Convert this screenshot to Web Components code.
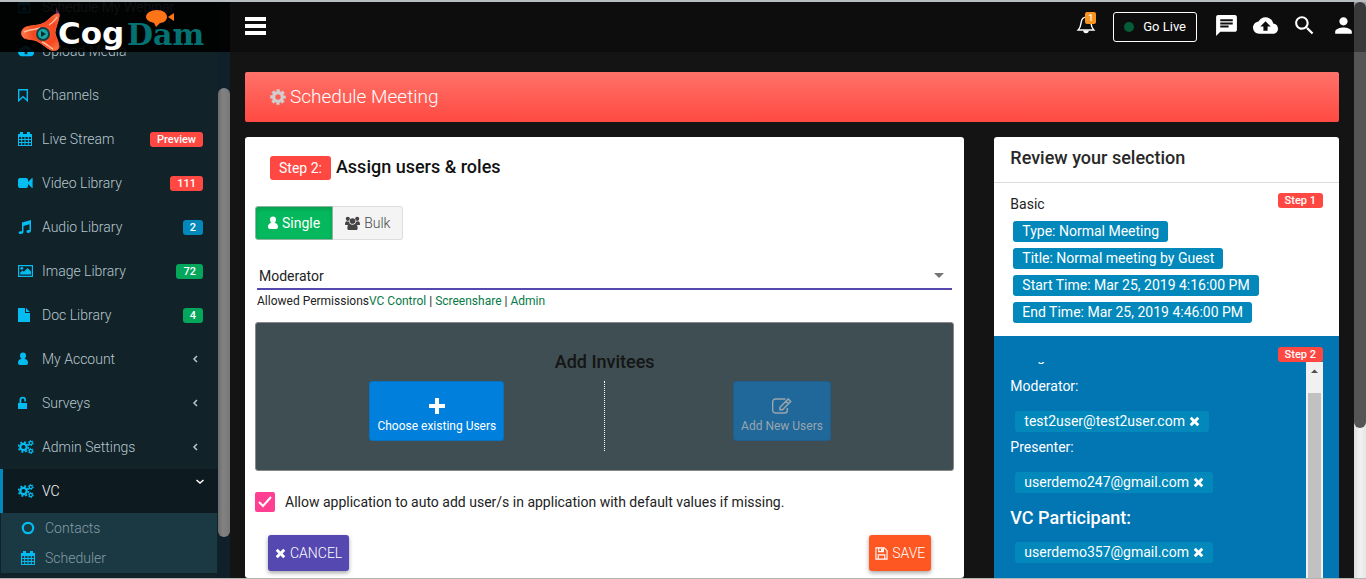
<!DOCTYPE html>
<html lang="en">
<head>
<meta charset="utf-8">
<title>CogDam - Schedule Meeting</title>
<style>
html,body{margin:0;height:100%}
body{font-family:Roboto,"Liberation Sans",sans-serif;font-size:14px;line-height:20px;color:#222;background:#141414;overflow:hidden}
</style>
</head>
<body>
<cd-app></cd-app>
<script>
const define = (name, html) => {
  const t = document.createElement('template');
  t.innerHTML = html;
  customElements.define(name, class extends HTMLElement {
    constructor() { super(); this.attachShadow({mode: 'open'}).append(t.content.cloneNode(true)); }
  });
};

const gears = '<g fill="none" stroke="currentColor"><circle cx="5.5" cy="8" r="3.2" stroke-width="2.2"/><circle cx="5.5" cy="8" r="5" stroke-width="1.6" stroke-dasharray="2 1.93"/><circle cx="12.8" cy="4" r="1.6" stroke-width="1.2"/><circle cx="12.8" cy="4" r="2.6" stroke-width="1" stroke-dasharray="1.3 1.42"/><circle cx="12.8" cy="12" r="1.6" stroke-width="1.2"/><circle cx="12.8" cy="12" r="2.6" stroke-width="1" stroke-dasharray="1.3 1.42"/></g>';
const user = '<path d="M5 1.500a3 3 0 0 1 3 3c0 1.600-.8 3-1.600 3.500C9 8 10 10 10 12c0 1.300-.8 2-2 2H2c-1.200 0-2-.7-2-2 0-2 1-4 3.600-4C2.800 7.500 2 6.100 2 4.500a3 3 0 0 1 3-3z"/>';
const calendar = '<path fill-rule="evenodd" d="M0 3h2V1h3v2h4V1h3v2h2v12H0zM1 6v2h2.200V6zm3.200 0v2h2.300V6zm3.300 0v2h2.300V6zm3.300 0v2H13V6zM1 9v2h2.200V9zm3.200 0v2h2.300V9zm3.300 0v2h2.300V9zm3.300 0v2H13V9zM1 12v2h2.200v-2zm3.200 0v2h2.300v-2zm3.300 0v2h2.300v-2zm3.300 0v2H13v-2z"/>';
const icons = {
  plusbox: [16, 16, '<path fill-rule="evenodd" d="M0 2h3V0h2v2h4V0h2v2h3v13H0zm1.500 4v7.500h11V6zM6 7h2v2h2v2H8v2H6v-2H4V9h2z"/>'],
  cloud: [24, 24, '<path d="M19.350 10.040C18.670 6.590 15.640 4 12 4 9.110 4 6.600 5.640 5.350 8.040 2.340 8.360 0 10.910 0 14c0 3.310 2.690 6 6 6h13c2.760 0 5-2.240 5-5 0-2.640-2.050-4.780-4.650-4.960zM14 13v4h-4v-4H7l5-5 5 5h-3z"/>'],
  bookmark: [16, 16, '<path fill="none" stroke="currentColor" stroke-width="1.400" d="M.7 2.700h8.600v11L5 9.800.7 13.700z"/>'],
  calendar: [16, 16, calendar],
  video: [16, 16, '<rect y="3" width="10" height="10" rx="2"/><path d="M10 7l4-4h.600v10H14l-4-4z"/>'],
  music: [16, 16, '<path d="M4 3.500L13 1v10.500c0 1.400-1 2.500-3 2.500-1.600 0-2.300-1.900-.700-2.700.7-.4 1.600-.5 2.200-.3V5.200L5.500 7v5.800c0 1.400-1 2.200-3 2.200-1.600 0-2.600-1.500-1-2.400.7-.4 1.900-.5 2.500-.3z"/>'],
  image: [16, 16, '<path fill-rule="evenodd" d="M0 2h15v12H0zm1.200 1.200v9.600h12.600V3.200z"/><circle cx="3.800" cy="5.300" r="1.400"/><path d="M2.300 11.600V9.500l2.200-2 1.300 1.200L9.600 5l3.400 3.400v3.200z"/>'],
  doc: [16, 16, '<path d="M0 1h7v5h5v9H0z"/><path d="M8 1l4 4H8z"/>'],
  user: [16, 16, user],
  person14: [10, 14, '<g transform="translate(0 -1)">' + user + '</g>'],
  unlock: [16, 16, '<path fill-rule="evenodd" d="M0 8h1.500V5a3 3 0 0 1 6.500 0v1.500H6.300V5c0-2-3-2-3 0v3H9v6H0z"/>'],
  gears: [16, 16, gears],
  ring: [16, 16, '<circle cx="7" cy="8" r="5.200" fill="none" stroke="currentColor" stroke-width="2.200"/>'],
  left: [16, 16, '<path d="M10 5L7 8l3 3" fill="none" stroke="currentColor" stroke-width="1.500"/>'],
  down: [16, 16, '<path d="M4.500 6L8 9l3.500-3" fill="none" stroke="currentColor" stroke-width="1.500"/>'],
  menu: [24, 24, '<path d="M0 2h21v4H0zm0 7h21v4H0zm0 7h21v4H0z"/>'],
  bell: [24, 24, '<path fill="none" stroke="currentColor" stroke-width="1.500" d="M12 2v2M3.500 18.500h17c-2-2-2.700-4-3.200-8C16.800 6.500 15 4.500 12 4.500s-4.800 2-5.300 6c-.5 4-1.200 6-3.200 8z"/><path d="M9 19h6a3 3 0 0 1-6 0z"/>'],
  chat: [24, 24, '<path d="M20 2H4c-1.100 0-1.990.9-1.990 2L2 22l4-4h14c1.100 0 2-.9 2-2V4c0-1.100-.9-2-2-2zM6 9h12v2H6V9zm8 5H6v-2h8v2zm4-6H6V6h12v2z"/>'],
  search: [24, 24, '<path d="M15.500 14h-.790l-.280-.270C15.410 12.590 16 11.110 16 9.500 16 5.910 13.090 3 9.500 3S3 5.910 3 9.500 5.910 16 9.500 16c1.610 0 3.090-.590 4.230-1.570l.270.280v.790l5 4.990L20.490 19l-4.990-5zm-6 0C7.010 14 5 11.990 5 9.500S7.010 5 9.500 5 14 7.010 14 9.500 11.990 14 9.500 14z"/>'],
  person: [24, 24, '<path d="M12 12c2.210 0 4-1.790 4-4s-1.790-4-4-4-4 1.790-4 4 1.790 4 4 4zm0 2c-2.670 0-8 1.340-8 4v2h16v-2c0-2.660-5.330-4-8-4z"/>'],
  cog: [16, 16, '<g fill="none" stroke="currentColor"><circle cx="8" cy="8" r="4.400" stroke-width="3.400"/><circle cx="8" cy="8" r="6.600" stroke-width="2.400" stroke-dasharray="3.200 1.984" stroke-dashoffset="1.600"/></g>'],
  users: [16, 16, '<circle cx="3" cy="3" r="2.200"/><circle cx="13" cy="3" r="2.200"/><circle cx="8" cy="5.300" r="3"/><path d="M0 9c0-2 .5-3.500 2-3.500l2.500.5c0 1.500.5 2 1 2.500-1 0-1.800.3-2.300 1H1C.4 9.500 0 9.400 0 9zm16 0c0-2-.5-3.500-2-3.500l-2.500.5c0 1.500-.5 2-1 2.500 1 0 1.800.3 2.300 1H15c.6 0 1-.1 1-.5zM2.500 13c0-3 1-4.500 3-4.500 1.500 1 3.500 1 5 0 2 0 3 1.500 3 4.500 0 1.300-.8 2-2 2h-7c-1.200 0-2-.7-2-2z"/>'],
  plus: [16, 16, '<path d="M6 0h4v6h6v4h-6v6H6v-6H0V6h6z"/>'],
  edit: [20, 16, '<path fill="none" stroke="currentColor" stroke-width="1.400" d="M13.500 1H3.500a2.800 2.800 0 0 0-2.800 2.800v8.400A2.800 2.800 0 0 0 3.500 15h9a2.800 2.800 0 0 0 2.800-2.800V10"/><path fill="none" stroke="currentColor" stroke-width="1.500" d="M8 9.200v2.500h2.500l8.200-8.200L16.200 1zM14 3.200l2.500 2.500"/>'],
  times: [12, 12, '<path d="M3 .8L6 3.700 9 .8 11.200 3 8.300 6l2.900 3L9 11.200 6 8.300l-3 2.900L.8 9l2.900-3L.8 3z"/>'],
  save: [14, 14, '<path fill="none" stroke="currentColor" stroke-width="1.200" d="M1 1h9l3 3v9H1zM4 1v4h5V1M3.500 13V8.500h7V13"/><path d="M6.500 1.500h2v3h-2z"/>'],
  arrow: [12, 6, '<path d="M1 0h10L6 5z"/>'],
  up: [9, 5, '<path d="M0 5l4.500-4.500L9 5z"/>']
};
customElements.define('cd-icon', class extends HTMLElement {
  constructor() { super(); this.attachShadow({mode: 'open'}); }
  connectedCallback() {
    const [w, h, body] = icons[this.getAttribute('name')];
    const size = this.getAttribute('size') || 16;
    this.shadowRoot.innerHTML = `<style>:host{display:inline-flex;flex:none}svg{display:block;fill:currentColor}</style>
      <svg width="${Math.round(size * w / h)}" height="${size}" viewBox="0 0 ${w} ${h}" aria-hidden="true">${body}</svg>`;
  }
});

define('cd-tag', `<style>
:host{display:inline-block;background:#0288bb;color:#fff;border-radius:3px;padding:0 9px;line-height:21px;font-size:14px;white-space:nowrap}
:host([small]){font-size:11px;line-height:15px;padding:0 7px;font-weight:500}
:host([tone=red]){background:#ff4842}
:host([tone=green]){background:#04a65b}
:host([tone=step]){background:#ff4842;line-height:24px}
</style><slot></slot>`);

define('cd-logo', `<style>:host{display:block}svg{display:block}</style>
<svg width="190" height="50" viewBox="0 0 190 50" role="img" aria-label="CogDam">
<defs><radialGradient id="g" gradientUnits="userSpaceOnUse" cx="30" cy="30" r="24"><stop offset="0" stop-color="#ff5a30"/><stop offset=".5" stop-color="#f4471f"/><stop offset="1" stop-color="#ff8050"/></radialGradient></defs>
<path d="M42 5c-1 4 4 5 3 9-1 3-5 4-7 8l-3-2c1-5 6-6 6-10 0-2 0-3 1-5z" fill="#5c2a5c"/>
<path d="M42 12c-4 0-8 6-13 9-5 3-12 2-18 4-5 2-6 8-2 11 4 2 9 1 13 3 6 3 9 7 14 9 3 1 7 1 8-3 0-5-3-9-4-14 0-5 4-12 4-17 0-2 0-3-2-2z" fill="url(#g)" stroke="#ff5a35" stroke-width="1"/>
<path d="M9 30c6-3 11-2 16-4M27 40c5 2 7 5 11 7M42 15c-2 4-5 6-8 8" fill="none" stroke="#ffc0a0" stroke-width="1.500"/>
<circle cx="28" cy="32" r="7" fill="#123e45"/><circle cx="28" cy="32" r="5" fill="#18a9a3"/><path d="M26 29l5 3-5 3z" fill="#082c35"/>
<path d="M142 8c6 0 10 3 10 7 0 3-3 6-7 6l-4 4-2-4c-4-1-8-3-8-6 0-4 5-7 11-7zM153 15l6-4v8z" fill="#ff7417"/>
<text x="43" y="42" font-family="DejaVu Sans" font-weight="700" font-size="31" fill="#fff">Cog</text>
<text x="112" y="43" font-family="DejaVu Serif" font-weight="700" font-size="30" fill="#047272">Dam</text>
</svg>`);

define('cd-nav-item', `<style>
:host{display:block;color:#b8c7ce}
a{display:flex;align-items:center;height:44px;padding:0 15px 0 15px;border-left:3px solid transparent;color:inherit;text-decoration:none;font-weight:300;font-size:14px}
.i{width:24px;color:#03bdf2;display:flex}
.t{flex:1}
:host([active]) a{background:#0d1a1f;border-color:#0288bb;color:#fff}
:host([sub]){color:#849da6}
:host([sub]) a{height:30px;padding-left:18px;border-left-width:2px}
</style><a href="#"><span class="i"><slot name="icon"></slot></span><span class="t"><slot></slot></span><slot name="end"></slot></a>`);

define('cd-sidebar', `<style>
:host{display:flex;background:#112229;overflow:hidden}
nav{flex:1;margin-top:-17px}
.sub{background:#1b3942;margin:0 1px}
.top{align-self:flex-start;margin:5px -5px 0 0}
.bar{width:12px;background:#10202a}
.thumb{margin-top:86px;height:78%;border-radius:6px;background:linear-gradient(90deg,#6c6c6c,#828282 40%,#787878)}
</style>
<nav>
<cd-nav-item><cd-icon slot="icon" name="plusbox" size="14"></cd-icon>Schedule My Webinar</cd-nav-item>
<cd-nav-item><cd-icon slot="icon" name="cloud" size="16"></cd-icon>Upload Media</cd-nav-item>
<cd-nav-item><cd-icon slot="icon" name="bookmark"></cd-icon>Channels</cd-nav-item>
<cd-nav-item><cd-icon slot="icon" name="calendar"></cd-icon>Live Stream<cd-tag slot="end" small tone="red">Preview</cd-tag></cd-nav-item>
<cd-nav-item><cd-icon slot="icon" name="video"></cd-icon>Video Library<cd-tag slot="end" small tone="red">111</cd-tag></cd-nav-item>
<cd-nav-item><cd-icon slot="icon" name="music"></cd-icon>Audio Library<cd-tag slot="end" small>2</cd-tag></cd-nav-item>
<cd-nav-item><cd-icon slot="icon" name="image"></cd-icon>Image Library<cd-tag slot="end" small tone="green">72</cd-tag></cd-nav-item>
<cd-nav-item><cd-icon slot="icon" name="doc"></cd-icon>Doc Library<cd-tag slot="end" small tone="green">4</cd-tag></cd-nav-item>
<cd-nav-item><cd-icon slot="icon" name="user"></cd-icon>My Account<cd-icon slot="end" name="left"></cd-icon></cd-nav-item>
<cd-nav-item><cd-icon slot="icon" name="unlock"></cd-icon>Surveys<cd-icon slot="end" name="left"></cd-icon></cd-nav-item>
<cd-nav-item><cd-icon slot="icon" name="gears"></cd-icon>Admin Settings<cd-icon slot="end" name="left"></cd-icon></cd-nav-item>
<cd-nav-item active><cd-icon slot="icon" name="gears"></cd-icon>VC<cd-icon class="top" slot="end" name="down"></cd-icon></cd-nav-item>
<div class="sub">
<cd-nav-item sub><cd-icon slot="icon" name="ring"></cd-icon>Contacts</cd-nav-item>
<cd-nav-item sub><cd-icon slot="icon" name="calendar"></cd-icon>Scheduler</cd-nav-item>
</div>
</nav>
<div class="bar"><div class="thumb"></div></div>`);

define('cd-header', `<style>
:host{display:flex;height:50px;background:rgba(0,0,0,.33);color:#fff}
.brand{width:210px;padding-left:15px;margin-right:5px;padding-right:5px;background:rgba(0,0,0,.86);display:flex}
.bar{flex:1;display:flex;align-items:center;padding:0 10px}
button{display:flex;align-items:center;background:none;border:0;padding:0;margin:0;color:inherit;font:inherit;cursor:pointer}
.space{flex:1}
.bell{position:relative;margin-right:16px}
.n{position:absolute;right:1px;top:-1px;width:11px;height:12px;border-radius:2px;background:#f7931e;font-size:9px;line-height:12px;text-align:center;font-weight:500}
.bell{padding-bottom:6px}
.tools{padding-bottom:4px}
.live{height:30px;padding:0 10px;border:1px solid #fff;border-radius:3px;font-size:13px;gap:9px;margin-right:17px}
.dot{width:10px;height:10px;border-radius:50%;background:#075c38}
.tools{display:flex;gap:14px}
</style>
<div class="brand"><cd-logo></cd-logo></div>
<div class="bar">
<button aria-label="Toggle menu"><cd-icon name="menu" size="24"></cd-icon></button>
<span class="space"></span>
<button class="bell" aria-label="Notifications"><cd-icon name="bell" size="22"></cd-icon><span class="n">1</span></button>
<button class="live"><span class="dot"></span>Go Live</button>
<div class="tools">
<button aria-label="Messages"><cd-icon name="chat" size="25"></cd-icon></button>
<button aria-label="Upload"><cd-icon name="cloud" size="25"></cd-icon></button>
<button aria-label="Search"><cd-icon name="search" size="25"></cd-icon></button>
<button aria-label="Account"><cd-icon name="person" size="25"></cd-icon></button>
</div></div>`);

define('cd-banner', `<style>
:host{display:flex;align-items:center;gap:4px;height:50px;padding:0 25px;border-radius:2px;background:linear-gradient(#ff7269,#ff4a42);color:#fff}
h1{margin:0;font-size:19px;line-height:24px;font-weight:300}
cd-icon{color:#d0cfcf}
</style><cd-icon name="cog" size="16"></cd-icon><h1><slot></slot></h1>`);

define('cd-invite', `<style>
:host{display:block;background:#3e4e52;border:1px solid #8b8789;border-radius:3px;padding:28px 0 19px;box-sizing:border-box}
h3{margin:0 0 8px;font-size:18px;line-height:22px;font-weight:500;color:#151515;text-align:center}
.cols{display:grid;grid-template-columns:1fr 1fr}
.cols>div{height:70px;display:flex;justify-content:center;align-items:flex-start;box-sizing:border-box}
.a{padding-left:14px;border-right:1px dotted #fff}
.b{padding-left:6px}
button{display:flex;flex-direction:column;align-items:center;justify-content:flex-end;gap:3px;height:60px;padding:0 7px 5px;background:#0080dc;border:1px solid #0672c0;border-radius:3px;color:#fff;font:400 12px/18px Roboto,sans-serif}
button:disabled{background:#20679a;border-color:#205e8c;color:#98a6ad}
</style><h3>Add Invitees</h3>
<div class="cols"><div class="a"><button><cd-icon name="plus"></cd-icon>Choose existing Users</button></div>
<div class="b"><button disabled><cd-icon name="edit"></cd-icon>Add New Users</button></div></div>`);

define('cd-form', `<style>
:host{display:block;background:#fff;border-radius:3px;padding:19px 10px 8px;box-sizing:border-box}
.head{display:flex;gap:5px;padding-left:15px}
h2{margin:0;font-size:18px;line-height:22px;font-weight:500;color:#111}
.mode{display:inline-flex;margin-top:26px}
.mode button{display:flex;align-items:center;gap:4px;height:34px;box-sizing:border-box;padding:0 12px;border:1px solid #ddd;border-left:0;border-radius:0 3px 3px 0;background:#f4f4f4;color:#444;font:300 14px/20px Roboto,sans-serif}
.mode button.on{background:#05b85d;border:1px solid #8fb5a0;border-radius:3px 0 0 3px;color:#fff;font-weight:400;box-shadow:inset 0 2px 4px rgba(0,0,0,.15)}
.role{display:flex;align-items:center;margin:24px 2px 0;border-bottom:2px solid #5548b0;height:24px}
select{flex:1;appearance:none;border:0;background:none;padding:0 2px;font:400 14px/20px Roboto,sans-serif;color:#222}
.role cd-icon{margin:0 7px 0 -19px;color:#757575;pointer-events:none}
.perm{margin:2px 2px 12px;font-size:12px;line-height:18px}
a{color:#067a46;text-decoration:none}
.check{display:flex;align-items:center;gap:10px;margin-top:21px;line-height:20px}
input{appearance:none;margin:0;width:20px;height:20px;border-radius:2px;background:#ff4092}
.tick{position:relative;display:flex}
.tick svg{position:absolute;left:2px;top:3px}
.foot{display:flex;justify-content:space-between;padding:23px 23px 0 13px}
.foot button{display:flex;align-items:center;gap:4px;height:36px;padding:0 7px;border:0;border-radius:3px;background:#5548b0;color:#fff;font:300 14px/20px Roboto,sans-serif;box-shadow:0 2px 4px rgba(0,0,0,.35)}
.foot .save{background:#ff5722;padding:0 6px}
</style>
<div class="head"><cd-tag tone="step">Step 2:</cd-tag><h2>Assign users &amp; roles</h2></div>
<div class="mode"><button class="on"><cd-icon name="person14" size="14"></cd-icon>Single</button><button><cd-icon name="users" size="15"></cd-icon>Bulk</button></div>
<div class="role"><select aria-label="Role"><option>Moderator</option><option>Presenter</option></select><cd-icon name="arrow" size="6"></cd-icon></div>
<div class="perm">Allowed Permissions<a href="#">VC Control</a> | <a href="#">Screenshare</a> | <a href="#">Admin</a></div>
<cd-invite></cd-invite>
<label class="check"><span class="tick"><input type="checkbox" checked><svg width="16" height="14" viewBox="0 0 16 14"><path d="M2 7l4 4 8-9" fill="none" stroke="#fff" stroke-width="2"/></svg></span>Allow application to auto add user/s in application with default values if missing.</label>
<div class="foot"><button><cd-icon name="times" size="11"></cd-icon>CANCEL</button><button class="save"><cd-icon name="save" size="13"></cd-icon>SAVE</button></div>`);

define('cd-user', `<style>
:host{display:block;padding-left:5px}
cd-tag{vertical-align:top}
button{border:0;background:none;color:#fff;padding:0;margin-left:4px;vertical-align:-1px}
</style><cd-tag><slot></slot><button aria-label="Remove user"><cd-icon name="times" size="11"></cd-icon></button></cd-tag>`);

define('cd-review', `<style>
:host{display:flex;flex-direction:column;background:#fff;border-radius:3px;box-sizing:border-box}
h2{margin:0;padding:9px 16px 13px;border-bottom:1px solid #ddd;font-size:18px;line-height:23px;font-weight:500;color:#282828}
.basic{display:flex;justify-content:space-between;align-items:flex-start;padding:10px 16px 13px}
p{margin:0;line-height:22px}
ul{list-style:none;margin:0;padding:6px 0 0 3px;display:grid;gap:6px;justify-items:start}
.step2{flex:1;min-height:0;display:flex;flex-direction:column;background:#0275b3;color:#fff;padding:11px 16px 0}
.step2>cd-tag{align-self:flex-end}
.scroll{flex:1;min-height:0;display:flex;overflow:hidden}
.list{flex:1;margin-top:-17px}
.bar{width:17px;background:#f1f1f1;padding:7px 0 0;display:flex;flex-direction:column;align-items:center;color:#505050}
.thumb{flex:1;width:13px;margin-top:20px;background:#c1c1c1}
.mod{margin:8px 0 14px}
.pre{margin:4px 0 14px}
h3{margin:14px 0 13px;font-size:18px;line-height:22px;font-weight:500}
</style>
<h2>Review your selection</h2>
<div class="basic"><div><p>Basic</p><ul><li><cd-tag>Type: Normal Meeting</cd-tag></li><li><cd-tag>Title: Normal meeting by Guest</cd-tag></li><li><cd-tag>Start Time: Mar 25, 2019 4:16:00 PM</cd-tag></li><li><cd-tag>End Time: Mar 25, 2019 4:46:00 PM</cd-tag></li></ul></div><cd-tag small tone="red">Step 1</cd-tag></div>
<div class="step2"><cd-tag small tone="red">Step 2</cd-tag>
<div class="scroll"><div class="list"><p>Assign</p>
<p class="mod">Moderator:</p><cd-user>test2user@test2user.com</cd-user>
<p class="pre">Presenter:</p><cd-user>userdemo247@gmail.com</cd-user>
<h3>VC Participant:</h3><cd-user>userdemo357@gmail.com</cd-user></div>
<div class="bar"><cd-icon name="up" size="4"></cd-icon><div class="thumb"></div></div></div></div>`);

define('cd-app', `<style>
:host{display:flex;flex-direction:column;height:100vh;box-sizing:border-box;border-top:2px solid #b9bfc0;border-bottom:1px solid #b4b4b4;position:relative}
cd-header{position:absolute;inset:0 0 auto 0;z-index:1}
.body{flex:1;min-height:0;display:flex}
cd-sidebar{width:230px;flex:none}
main{flex:1;min-width:0;min-height:0;padding:70px 15px 0;overflow:hidden;display:flex;flex-direction:column;box-sizing:border-box}
.row{flex:1;min-height:0;display:grid;grid-template-columns:2fr 1fr;margin:15px -15px 0}
.row>div{padding:0 15px;min-height:0;min-width:0;display:flex}
.row>div>*{flex:1;min-width:0}
.bar{width:12px;background:linear-gradient(90deg,#ddd,#f2f2f2 50%,#e6e6e6)}
.thumb{height:74%;border-radius:6px;background:#555}
</style>
<cd-header></cd-header>
<div class="body"><cd-sidebar></cd-sidebar>
<main><cd-banner>Schedule Meeting</cd-banner>
<div class="row"><div><cd-form></cd-form></div><div><cd-review></cd-review></div></div></main>
<div class="bar"><div class="thumb"></div></div></div>`);
</script>
</body>
</html>
